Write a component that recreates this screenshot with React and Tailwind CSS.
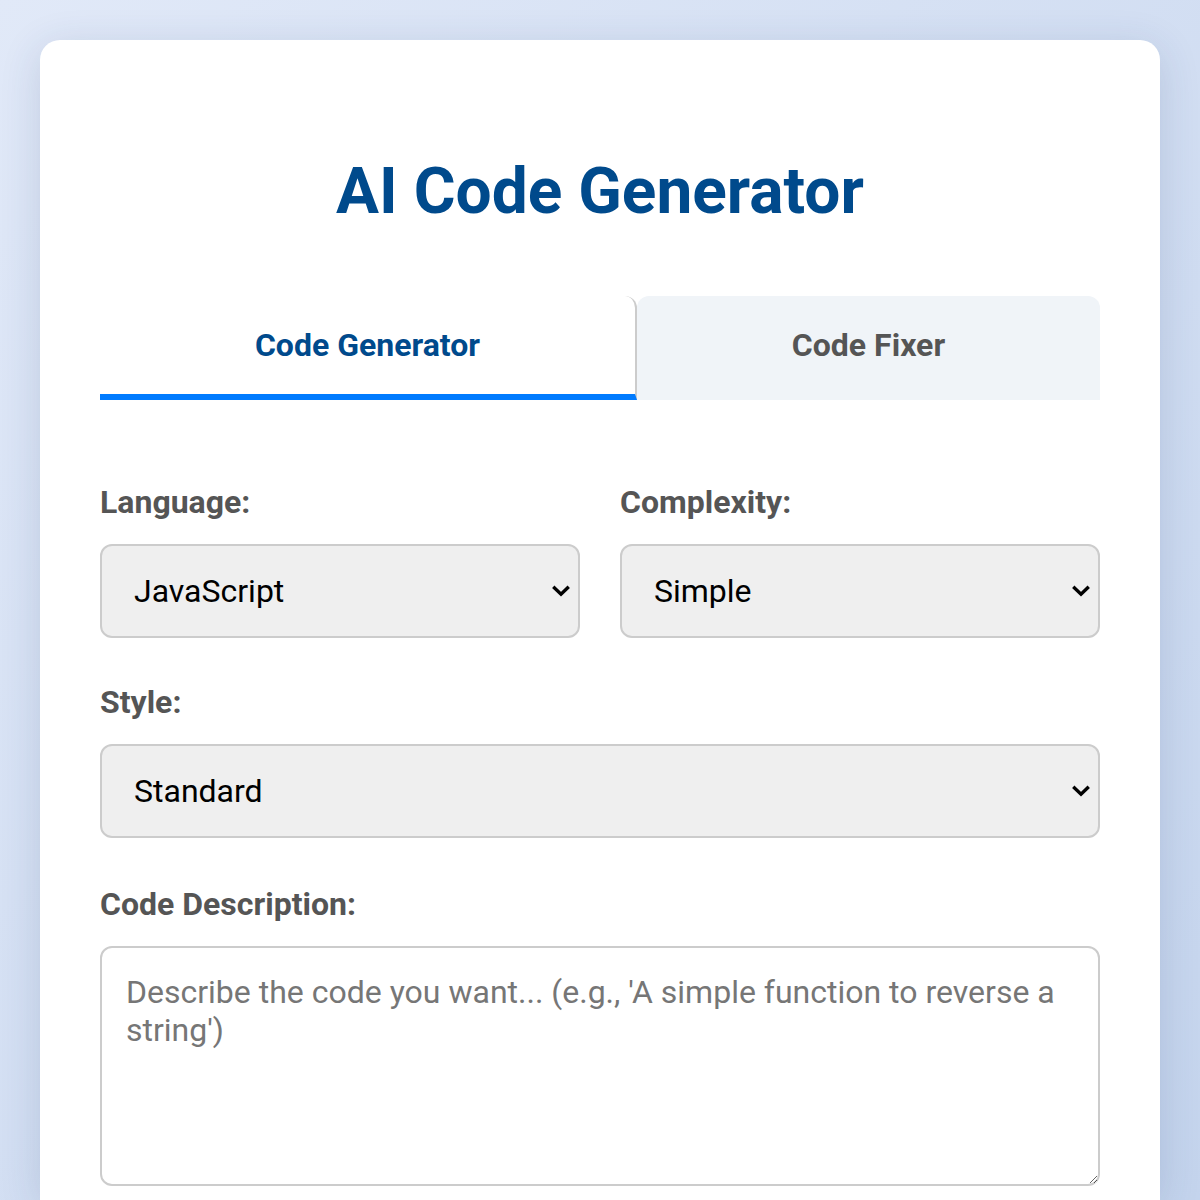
// Code generator form: title, two tabs, three selects and a description box.
import React from 'react';

const LANGUAGES = ['JavaScript', 'Python', 'Java', 'C++', 'Go', 'Rust'];
const COMPLEXITY = ['Simple', 'Intermediate', 'Advanced'];
const STYLES = ['Standard', 'Functional', 'Object-Oriented'];

function Chevron() {
  return (
    <svg
      width="18"
      height="12"
      viewBox="0 0 18 12"
      className="pointer-events-none absolute right-[10px] top-1/2 -translate-y-1/2"
    >
      <path d="M2.5 3L9 9.2L15.5 3" fill="none" stroke="#000" strokeWidth="3.4" strokeLinecap="square" />
    </svg>
  );
}

function Select({ value, options, onChange }) {
  return (
    <div className="relative">
      <select
        value={value}
        onChange={(e) => onChange(e.target.value)}
        className="w-full h-[94px] appearance-none rounded-[12px] border-2 border-[#cccccc] bg-[#efefef] pl-[32px] pr-12 text-[32px] text-black outline-none"
      >
        {options.map((o) => (
          <option key={o}>{o}</option>
        ))}
      </select>
      <Chevron />
    </div>
  );
}

function Label({ children }) {
  return <label className="block mb-[22px] text-[32px] leading-[40px] font-bold text-[#555555]">{children}</label>;
}

export default function App() {
  const [tab, setTab] = React.useState('generator');
  const [language, setLanguage] = React.useState('JavaScript');
  const [complexity, setComplexity] = React.useState('Simple');
  const [style, setStyle] = React.useState('Standard');
  const [desc, setDesc] = React.useState('');

  const tabClass = (active) =>
    active
      ? 'flex-auto h-[104px] rounded-t-[12px] bg-white border-b-[6px] border-r-2 border-b-[#007bff] border-r-[#cccccc] text-[#004a8c]'
      : 'flex-auto h-[104px] rounded-t-[12px] bg-[#f0f4f8] border-b-[6px] border-transparent text-[#555555]';

  return (
    <div
      className="min-h-[1200px] bg-gradient-to-br from-[#e1e9f8] to-[#c4d4ed] px-10 pt-10"
      style={{ fontFamily: 'Roboto, "Noto Sans", sans-serif' }}
    >
      <div className="h-[1160px] rounded-t-[20px] bg-white px-[60px] pt-[114px] shadow-[0_8px_40px_rgba(40,60,110,0.16)]">
        <h1 className="text-center text-[64px] leading-[76px] font-bold text-[#004a8c]">AI Code Generator</h1>

        <div className="mt-[66px] flex">
          <button onClick={() => setTab('generator')} className={tabClass(tab === 'generator')}>
            <span className="text-[32px] font-bold">Code Generator</span>
          </button>
          <button onClick={() => setTab('fixer')} className={tabClass(tab === 'fixer')}>
            <span className="text-[32px] font-bold">Code Fixer</span>
          </button>
        </div>

        <div className="mt-[82px] grid grid-cols-2 gap-x-10">
          <div>
            <Label>Language:</Label>
            <Select value={language} options={LANGUAGES} onChange={setLanguage} />
          </div>
          <div>
            <Label>Complexity:</Label>
            <Select value={complexity} options={COMPLEXITY} onChange={setComplexity} />
          </div>
        </div>

        <div className="mt-[44px]">
          <Label>Style:</Label>
          <Select value={style} options={STYLES} onChange={setStyle} />
        </div>

        <div className="mt-[46px]">
          <Label>Code Description:</Label>
          <textarea
            value={desc}
            onChange={(e) => setDesc(e.target.value)}
            placeholder="Describe the code you want... (e.g., 'A simple function to reverse a string')"
            className="block w-full h-[240px] rounded-[12px] border-2 border-[#cccccc] bg-white px-[24px] pt-[25px] pb-[24px] text-[32px] leading-[38px] text-black outline-none placeholder:text-[#767676]"
          />
        </div>
      </div>
    </div>
  );
}
